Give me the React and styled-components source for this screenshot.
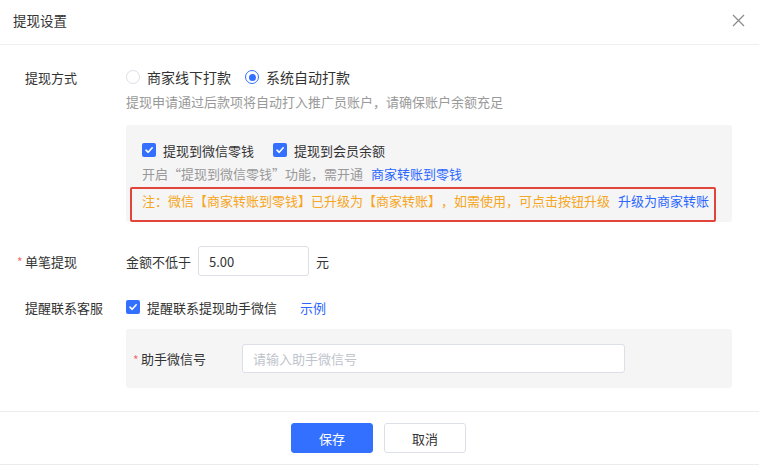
import React, { useState } from 'react';
import styled, { createGlobalStyle } from 'styled-components';

const GlobalStyle = createGlobalStyle`
    html, body {
        margin: 0;
        padding: 0;
        background: #ffffff;
    }
    body {
        font-family: "Noto Sans CJK SC", "Noto Sans", "Liberation Sans", sans-serif;
        font-size: 13px;
        color: #333333;
        text-spacing-trim: space-all;
    }
    * {
        box-sizing: border-box;
    }
`;

const Dialog = styled.div`
    width: 759px;
    height: 465px;
    display: flex;
    flex-direction: column;
    background: #ffffff;
`;

const Header = styled.div`
    height: 45px;
    display: flex;
    align-items: center;
    justify-content: space-between;
    padding: 0 14px 4px 13px;
    border-bottom: 1px solid #efefef;
`;

const Title = styled.div`
    font-size: 13.5px;
    color: #333333;
`;

const CloseButton = styled.button`
    border: none;
    background: transparent;
    padding: 0;
    width: 14px;
    height: 14px;
    display: flex;
    align-items: center;
    justify-content: center;
    cursor: pointer;
`;

const Body = styled.div`
    flex: 1;
    padding: 16px 27px 0 25px;
    display: flex;
    flex-direction: column;
`;

const FormItem = styled.div`
    display: flex;
    margin-top: ${props => props.top || 0}px;
`;

const Label = styled.div`
    width: 101px;
    flex-shrink: 0;
    height: ${props => props.height || 32}px;
    display: flex;
    align-items: center;
    color: #333333;
    position: relative;
    &::before {
        content: ${props => props.required ? '"*"' : 'none'};
        color: #f56c6c;
        position: absolute;
        left: -8px;
        top: ${props => (props.height || 32) / 2 - 8}px;
        font-size: 12px;
    }
`;

const Content = styled.div`
    flex: 1;
    display: flex;
    flex-direction: column;
`;

const Row = styled.div`
    display: flex;
    align-items: center;
    height: ${props => props.height || 32}px;
`;

const Option = styled.label`
    display: flex;
    align-items: center;
    gap: 7px;
    margin-right: ${props => props.space || 14}px;
    font-size: ${props => props.size || 13}px;
    cursor: pointer;
    color: #333333;
`;

const RadioCircle = styled.span`
    width: 14px;
    height: 14px;
    border-radius: 50%;
    border: 1px solid ${props => props.checked ? '#3370ff' : '#dcdfe6'};
    background: #ffffff;
    display: flex;
    align-items: center;
    justify-content: center;
    &::after {
        content: '';
        width: 7px;
        height: 7px;
        border-radius: 50%;
        background: ${props => props.checked ? '#3370ff' : 'transparent'};
    }
`;

const CheckBox = styled.span`
    width: 14px;
    height: 14px;
    border-radius: 2px;
    background: #3370ff;
    display: flex;
    align-items: center;
    justify-content: center;
`;

const Help = styled.div`
    color: #999999;
    line-height: 18px;
    height: 18px;
`;

const GrayPanel = styled.div`
    margin-top: ${props => props.top || 0}px;
    background: #f5f5f6;
    border-radius: 3px;
    padding: ${props => props.pad || '0 16px'};
    display: flex;
    flex-direction: column;
`;

const Line = styled.div`
    line-height: 20px;
    height: 20px;
    color: ${props => props.color || '#999999'};
    margin-top: ${props => props.top || 0}px;
    white-space: nowrap;
`;

const Link = styled.a`
    color: #2c68ff;
    text-decoration: none;
    margin-left: ${props => props.left || 0}px;
    cursor: pointer;
`;

const Annotated = styled.div`
    align-self: flex-start;
    margin: 3px 0 0 -12px;
    padding: 2px 5px 9px 10px;
    border: 2px solid #e0443a;
    border-radius: 2px;
    line-height: 20px;
    color: #f5a623;
    white-space: nowrap;
`;

const TextInput = styled.input`
    width: ${props => props.width}px;
    height: ${props => props.height || 30}px;
    border: 1px solid #dcdfe6;
    border-radius: 3px;
    padding: 0 10px;
    font-family: inherit;
    font-size: 13px;
    color: #333333;
    background: #ffffff;
    outline: none;
    margin: ${props => props.flush ? '0' : '0 7px'};
    &::placeholder {
        color: #c0c4cc;
    }
`;

const Footer = styled.div`
    height: 54px;
    border-top: 1px solid #ececec;
    border-bottom: 1px solid #ececec;
    display: flex;
    align-items: center;
    justify-content: center;
    gap: 11px;
    padding-right: 2px;
`;

const Button = styled.button`
    width: 82px;
    height: 30px;
    border-radius: 3px;
    font-family: inherit;
    font-size: 13px;
    cursor: pointer;
    border: 1px solid ${props => props.primary ? '#3370ff' : '#dcdfe6'};
    background: ${props => props.primary ? '#3370ff' : '#ffffff'};
    color: ${props => props.primary ? '#ffffff' : '#333333'};
`;

const Check = () => (
    <svg width="10" height="10" viewBox="0 0 10 10">
        <path d="M2 5.2 L4.2 7.3 L8.2 2.8" fill="none" stroke="#ffffff" strokeWidth="1.6" strokeLinecap="round" strokeLinejoin="round" />
    </svg>
);

export default function App() {
    const [mode, setMode] = useState('auto');
    const [amount, setAmount] = useState('5.00');

    return (
        <Dialog>
            <GlobalStyle />
            <Header>
                <Title>提现设置</Title>
                <CloseButton aria-label="关闭">
                    <svg width="13" height="13" viewBox="0 0 13 13">
                        <path d="M1 1 L12 12 M12 1 L1 12" stroke="#8c8c8c" strokeWidth="1.3" />
                    </svg>
                </CloseButton>
            </Header>

            <Body>
                <FormItem>
                    <Label>提现方式</Label>
                    <Content>
                        <Row>
                            <Option size={14} onClick={() => setMode('offline')}>
                                <RadioCircle checked={mode === 'offline'} />
                                商家线下打款
                            </Option>
                            <Option size={14} onClick={() => setMode('auto')}>
                                <RadioCircle checked={mode === 'auto'} />
                                系统自动打款
                            </Option>
                        </Row>
                        <Help>提现申请通过后款项将自动打入推广员账户，请确保账户余额充足</Help>
                        <GrayPanel top={14} pad="15px 16px 0">
                            <Row height={20}>
                                <Option space={19}>
                                    <CheckBox><Check /></CheckBox>
                                    提现到微信零钱
                                </Option>
                                <Option>
                                    <CheckBox><Check /></CheckBox>
                                    提现到会员余额
                                </Option>
                            </Row>
                            <Line top={4}>
                                开启“提现到微信零钱”功能，需开通<Link left={8}>商家转账到零钱</Link>
                            </Line>
                            <Annotated>
                                注：微信【商家转账到零钱】已升级为【商家转账】，如需使用，可点击按钮升级<Link left={8}>升级为商家转账</Link>
                            </Annotated>
                        </GrayPanel>
                    </Content>
                </FormItem>

                <FormItem top={24}>
                    <Label required height={30}>单笔提现</Label>
                    <Row height={30}>
                        金额不低于
                        <TextInput width={111} value={amount} onChange={e => setAmount(e.target.value)} />
                        元
                    </Row>
                </FormItem>

                <FormItem top={15}>
                    <Label>提醒联系客服</Label>
                    <Content>
                        <Row>
                            <Option space={23}>
                                <CheckBox><Check /></CheckBox>
                                提醒联系提现助手微信
                            </Option>
                            <Link>示例</Link>
                        </Row>
                        <GrayPanel top={6} pad="15px 15px">
                            <FormItem>
                                <Label required height={29}>助手微信号</Label>
                                <TextInput flush width={383} height={29} placeholder="请输入助手微信号" />
                            </FormItem>
                        </GrayPanel>
                    </Content>
                </FormItem>
            </Body>

            <Footer>
                <Button primary>保存</Button>
                <Button>取消</Button>
            </Footer>
        </Dialog>
    );
}
